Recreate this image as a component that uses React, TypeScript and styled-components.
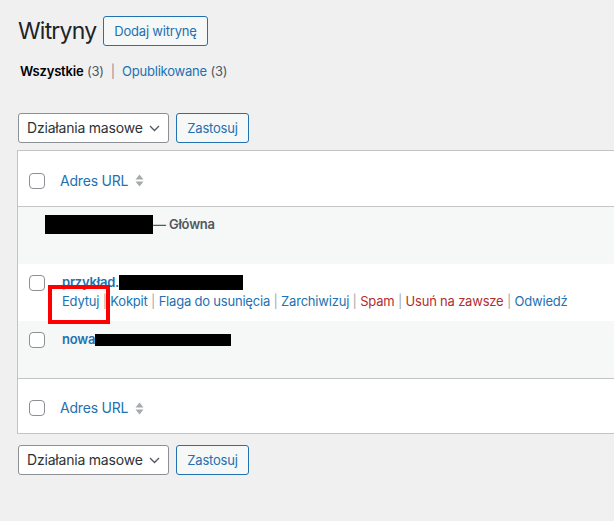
import React from "react";
import styled, { createGlobalStyle } from "styled-components";

const GlobalStyle = createGlobalStyle`
  * { box-sizing: border-box; }
  body {
    margin: 0;
    background: #f0f0f1;
    font-family: "Inter", "Liberation Sans", sans-serif;
    letter-spacing: -0.2px;
    color: #3c434a;
    overflow: hidden;
  }
`;

const Page = styled.div`
  padding: 16px 0 0 18px;
  overflow: hidden;
`;

const HeadingRow = styled.div`
  display: flex;
  align-items: center;
  height: 30px;
`;

const Title = styled.h1`
  margin: 0 7px 0 0;
  font-size: 23px;
  font-weight: 400;
  line-height: 30px;
  letter-spacing: -0.8px;
  color: #1d2327;
`;

const OutlineButton = styled.button<{ $width?: number }>`
  height: 30px;
  width: ${(p) => (p.$width ? `${p.$width}px` : "auto")};
  padding: 0 10px;
  border: 1px solid #2271b1;
  border-radius: 3px;
  background: #f6f7f7;
  color: #2271b1;
  font-family: inherit;
  font-size: 13px;
  letter-spacing: -0.2px;
  line-height: 28px;
  cursor: pointer;
`;

const Filters = styled.ul`
  display: flex;
  margin: 16px 0 0 2px;
  padding: 0;
  list-style: none;
  font-size: 13px;
  line-height: 18px;
  color: #646970;
`;

const FilterItem = styled.li<{ $current?: boolean }>`
  & > a {
    color: ${(p) => (p.$current ? "#000" : "#2271b1")};
    font-weight: ${(p) => (p.$current ? 600 : 400)};
    text-decoration: none;
  }
  & .count {
    color: #50575e;
  }
`;

const Sep = styled.span`
  color: #8c8f94;
  padding: 0 7px;
`;

const BulkBar = styled.div<{ $gap: number }>`
  display: flex;
  gap: 7px;
  margin-top: ${(p) => p.$gap}px;
`;

const FakeSelect = styled.div`
  width: 151px;
  height: 30px;
  padding: 0 8px 0 8px;
  border: 1px solid #8c8f94;
  border-radius: 3px;
  background: #fff;
  color: #2c3338;
  font-size: 14px;
  line-height: 28px;
  display: flex;
  align-items: center;
  justify-content: space-between;
`;

const Table = styled.div`
  margin: 7px -40px 0 -1px;
  border: 1px solid #c3c4c7;
  background: #fff;
`;

const EdgeRow = styled.div<{ $top?: boolean }>`
  display: flex;
  align-items: center;
  height: ${(p) => (p.$top ? 56 : 55)}px;
  padding: 4px 0 0 11px;
  border-bottom: ${(p) => (p.$top ? "1px solid #c3c4c7" : "none")};
  border-top: ${(p) => (p.$top ? "none" : "1px solid #c3c4c7")};
`;

const Row = styled.div<{ $striped?: boolean; $raised?: boolean }>`
  position: relative;
  z-index: ${(p) => (p.$raised ? 2 : 1)};
  display: flex;
  align-items: flex-start;
  height: 57px;
  padding: 11px 0 0 11px;
  background: ${(p) => (p.$striped ? "#f6f7f7" : "#fff")};
`;

const Checkbox = styled.span`
  flex: none;
  width: 16px;
  height: 16px;
  border: 1px solid #8c8f94;
  border-radius: 4px;
  background: #fff;
`;

const SortLink = styled.a`
  display: flex;
  align-items: center;
  gap: 7px;
  margin-left: 15px;
  font-size: 14px;
  line-height: 20px;
  color: #2271b1;
  text-decoration: none;
`;

const Cell = styled.div<{ $indent: number; $lift: number }>`
  margin-left: ${(p) => p.$indent}px;
  margin-top: -${(p) => p.$lift}px;
  font-size: 13px;
  line-height: 19px;
`;

const TitleLine = styled.div`
  display: flex;
  align-items: center;
  height: 19px;
  font-weight: 600;
  white-space: nowrap;
  & > a {
    color: #2271b1;
    text-decoration: none;
  }
`;

const PostState = styled.span`
  color: #50575e;
`;

const Redacted = styled.span<{ $w: number; $h: number }>`
  display: inline-block;
  width: ${(p) => p.$w}px;
  height: ${(p) => p.$h}px;
  background: #000;
`;

const Actions = styled.div`
  position: relative;
  white-space: nowrap;
  color: #a7aaad;
`;

const ActionLink = styled.a<{ $danger?: boolean }>`
  color: ${(p) => (p.$danger ? "#b32d2e" : "#2271b1")};
  text-decoration: none;
`;

const Highlight = styled.span`
  position: absolute;
  left: -14px;
  top: -7px;
  width: 62px;
  height: 39px;
  border: 4px solid #f00;
  pointer-events: none;
`;

const SortIcon = () => (
  <svg width="9" height="13" viewBox="0 0 9 13" fill="#a7aaad">
    <path d="M0.5 5.5 L4.5 0.5 L8.5 5.5 Z" />
    <path d="M0.5 7.5 L4.5 12.5 L8.5 7.5 Z" />
  </svg>
);

const Chevron = () => (
  <svg width="11" height="7" viewBox="0 0 11 7" fill="none">
    <path d="M1 1 L5.5 5.5 L10 1" stroke="#50575e" strokeWidth="1.3" />
  </svg>
);

const Bulk: React.FC<{ gap: number }> = ({ gap }) => (
  <BulkBar $gap={gap}>
    <FakeSelect>
      Działania masowe
      <Chevron />
    </FakeSelect>
    <OutlineButton $width={73}>Zastosuj</OutlineButton>
  </BulkBar>
);

const actions: { label: string; danger?: boolean }[] = [
  { label: "Edytuj" },
  { label: "Kokpit" },
  { label: "Flaga do usunięcia" },
  { label: "Zarchiwizuj" },
  { label: "Spam", danger: true },
  { label: "Usuń na zawsze", danger: true },
  { label: "Odwiedź" },
];

const App: React.FC = () => {
  return (
    <>
      <GlobalStyle />
      <Page>
        <HeadingRow>
          <Title>Witryny</Title>
          <OutlineButton>Dodaj witrynę</OutlineButton>
        </HeadingRow>

        <Filters>
          <FilterItem $current>
            <a href="#">Wszystkie</a> <span className="count">(3)</span>
            <Sep>|</Sep>
          </FilterItem>
          <FilterItem>
            <a href="#">Opublikowane</a> <span className="count">(3)</span>
          </FilterItem>
        </Filters>

        <Bulk gap={33} />

        <Table>
          <EdgeRow $top>
            <Checkbox />
            <SortLink href="#">
              Adres URL
              <SortIcon />
            </SortLink>
          </EdgeRow>

          <Row $striped>
            <Cell $indent={16} $lift={3}>
              <TitleLine>
                <Redacted $w={108} $h={19} />
                <PostState>— Główna</PostState>
              </TitleLine>
            </Cell>
          </Row>

          <Row $raised>
            <Checkbox />
            <Cell $indent={17} $lift={2}>
              <TitleLine>
                <a href="#">przykład.</a>
                <Redacted $w={124} $h={15} />
              </TitleLine>
              <Actions>
                {actions.map((a, i) => (
                  <React.Fragment key={a.label}>
                    {i > 0 && " | "}
                    <ActionLink href="#" $danger={a.danger}>
                      {a.label}
                    </ActionLink>
                  </React.Fragment>
                ))}
                <Highlight />
              </Actions>
            </Cell>
          </Row>

          <Row $striped>
            <Checkbox />
            <Cell $indent={17} $lift={2}>
              <TitleLine>
                <a href="#">nowa</a>
                <Redacted $w={136} $h={12} />
              </TitleLine>
            </Cell>
          </Row>

          <EdgeRow>
            <Checkbox />
            <SortLink href="#">
              Adres URL
              <SortIcon />
            </SortLink>
          </EdgeRow>
        </Table>

        <Bulk gap={11} />
      </Page>
    </>
  );
};

export default App;
